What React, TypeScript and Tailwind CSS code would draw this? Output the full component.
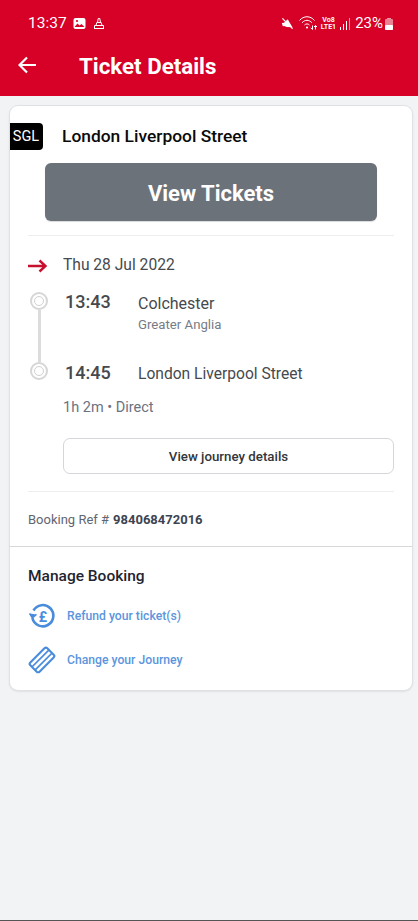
import React from 'react';

function StatusIcons() {
  return (
    <div className="flex items-center text-white">
      {/* muted speaker */}
      <svg width="13" height="13" viewBox="0 0 14 14" className="mr-[5px]">
        <path d="M1 5.5h2.5L8 2.5l3.5 9.5-6 -1.5L3 9H1.5z" fill="#fff" transform="rotate(-10 7 7)" />
        <path d="M1.5 1.5l11 11" stroke="#fff" strokeWidth="1.4" />
      </svg>
      {/* wifi */}
      <svg width="18" height="15" viewBox="0 0 18 15" fill="none" stroke="#fff" strokeWidth="1" className="mr-[4px] mt-[-2px]">
        <path d="M0.5 5.5C4.5 0.5 11.5 0.5 15.5 5.5" />
        <path d="M3 7.8C6 4.5 10 4.5 13 7.8" />
        <path d="M5.5 10c1.4-1.4 3.6-1.4 5 0" />
        <circle cx="8" cy="12.5" r="1.1" fill="#fff" stroke="none" />
        <path d="M13.5 10.5v4M11.8 12.8l1.7 1.7M16.5 14.5v-4M15 12l1.5-1.5 1.5 1.5" strokeWidth="1" />
      </svg>
      {/* volte */}
      <div className="mr-[4px] flex flex-col items-center text-[7px] font-bold leading-[7px]">
        <span>Vo8</span>
        <span>LTE1</span>
      </div>
      {/* signal */}
      <div className="mr-[5px] flex items-end gap-[2px]">
        <span className="h-[3px] w-[1px] bg-white" />
        <span className="h-[6px] w-[1px] bg-white" />
        <span className="h-[9px] w-[1px] bg-white" />
        <span className="h-[12px] w-[1px] bg-white/60" />
      </div>
      <span className="text-[15px] leading-none">23%</span>
      {/* battery */}
      <div className="ml-[2px] flex flex-col items-center">
        <span className="h-[1px] w-[4px] bg-white/60" />
        <div className="flex h-[11px] w-[8px] flex-col justify-end rounded-[1px] bg-white/50">
          <span className="h-[5px] w-full rounded-[1px] bg-white" />
        </div>
      </div>
    </div>
  );
}

function RefundIcon() {
  return (
    <svg width="28" height="28" viewBox="0 0 28 28" fill="none" stroke="#4a8cdc" strokeWidth="2.6">
      <path d="M5.5 8.5A10.6 10.6 0 1 1 4.4 16" />
      <path d="M1.5 11.5L4.4 16 8.5 12.5" fill="#4a8cdc" strokeWidth="1.4" />
      <text x="15" y="19.5" textAnchor="middle" fontSize="14" fontWeight="700" fill="#4a8cdc" stroke="none" fontFamily="Roboto, sans-serif">£</text>
    </svg>
  );
}

function TicketIcon() {
  return (
    <svg width="28" height="28" viewBox="0 0 28 28" fill="none" stroke="#4a8cdc" strokeWidth="2.1" strokeLinejoin="round">
      <rect x="2" y="7.5" width="24" height="13" rx="2" transform="rotate(-45 14 14)" />
      <path d="M3.9 21L21 3.9M7 24.1L24.1 7" strokeWidth="1.7" />
    </svg>
  );
}

function Stop() {
  return (
    <div className="flex h-[18px] w-[18px] shrink-0 items-center justify-center rounded-full border-[2px] border-[#d6d6d6] bg-white">
      <div className="h-[10px] w-[10px] rounded-full border border-[#d0d0d0]" />
    </div>
  );
}

export default function App() {
  return (
    <div className="flex h-[921px] flex-col overflow-hidden bg-[#f2f3f5] font-['Roboto',sans-serif]">
      {/* Header */}
      <header className="h-[96px] shrink-0 bg-[#d70026] text-white">
        <div className="flex h-[46px] items-center justify-between pl-[28px] pr-[25px] pt-[1px]">
          <div className="flex items-center">
            <span className="text-[15.5px] leading-none">13:37</span>
            <svg width="13" height="13" viewBox="0 0 13 13" className="ml-[6px]">
              <rect x="0.5" y="1" width="12" height="11" rx="2" fill="#fff" />
              <path d="M1.5 10l3-3.5 2 2 2-1.5 3 3z" fill="#d70026" />
              <circle cx="4" cy="4" r="1.1" fill="#d70026" />
            </svg>
            <svg width="12" height="13" viewBox="0 0 12 13" fill="none" stroke="#fff" strokeWidth="1" className="ml-[7px]">
              <path d="M4.5 5.5L5.2 1.5h1.6l.7 4M3 8.5l.8-3h4.4l.8 3M1 11.5h10M1.5 8.5h9v3h-9z" />
            </svg>
          </div>
          <StatusIcons />
        </div>
        <div className="flex h-[40px] items-center pl-[18px]">
          {/* back arrow, wider than the lucide one */}
          <svg width="18" height="18" viewBox="0 0 18 18" fill="none" stroke="#fff" strokeWidth="2.2" className="mt-[-3px]">
            <path d="M18 9H1.5M9 1.5L1.5 9 9 16.5" />
          </svg>
          <h1 className="ml-[43px] text-[22.3px] font-bold leading-none">Ticket Details</h1>
        </div>
      </header>

      {/* Card */}
      <main className="mx-[9px] mt-[9px] h-[586px] w-[404px] shrink-0 overflow-hidden rounded-[9px] border border-[#dfe1e5] bg-white shadow-[0_1px_2px_rgba(0,0,0,0.08)]">
        <div className="flex h-[57px] items-start pt-[17px]">
          <div className="ml-[-1px] flex h-[27px] w-[34px] items-center justify-center rounded-r-[4px] bg-black pt-[1px] text-[14.5px] leading-none text-white">
            SGL
          </div>
          <span className="ml-[19px] mt-[1px] text-[17.4px] font-medium leading-[24px] text-[#0a0a0a]">London Liverpool Street</span>
        </div>

        <div className="px-[35px]">
          <button className="flex h-[58px] w-[332px] items-center justify-center rounded-[6px] bg-[#6c727a] pt-[2px] text-[22px] font-bold text-white shadow-[0_1px_1px_rgba(0,0,0,0.15)]">
            View Tickets
          </button>
        </div>

        <div className="mx-[18px] mt-[14px] border-t border-[#eeeeee]" />

        {/* Journey */}
        <div className="px-[18px]">
          <div className="flex h-[56px] items-center pt-[3px]">
            <svg width="19" height="14" viewBox="0 0 19 14" fill="none" stroke="#c8102e" strokeWidth="2.4">
              <path d="M0 7h17M11.5 1.5L17.5 7l-6 5.5" />
            </svg>
            <span className="ml-[16px] text-[15.6px] text-[#46494d]">Thu 28 Jul 2022</span>
          </div>

          <div className="flex">
            <div className="w-[35px] shrink-0">
              <div className="ml-[2px] flex w-[18px] flex-col items-center">
                <Stop />
                <div className="h-[52px] w-[3px] bg-[#dcdcdc]" />
                <Stop />
              </div>
            </div>
            <div className="flex-1 pl-[2px]">
              <div className="flex items-start">
                <span className="w-[73px] text-[18px] font-medium leading-[20px] text-[#46494d]">13:43</span>
                <div className="pt-[2px]">
                  <div className="text-[16px] leading-[20px] text-[#46494d]">Colchester</div>
                  <div className="mt-[2px] text-[13.2px] leading-[18px] text-[#757c87]">Greater Anglia</div>
                </div>
              </div>
              <div className="mt-[29px] flex items-start">
                <span className="w-[73px] text-[18px] font-medium leading-[20px] text-[#46494d]">14:45</span>
                <span className="pt-[1px] text-[15.6px] leading-[20px] text-[#46494d]">London Liverpool Street</span>
              </div>
            </div>
          </div>

          <div className="mt-[14px] pl-[35px] text-[14.5px] leading-[20px] text-[#6b7280]">1h 2m • Direct</div>

          <div className="mt-[20px] pl-[35px]">
            <button className="flex h-[36px] w-full items-center justify-center rounded-[7px] border border-[#d4d6da] bg-white pt-[2px] text-[13.3px] font-medium text-[#33363a]">
              View journey details
            </button>
          </div>

          <div className="mt-[17px] border-t border-[#eeeeee]" />

          <div className="flex h-[54px] items-center pt-[1px] text-[13px] text-[#5f6670]">
            Booking Ref #<span className="ml-[4px] font-bold text-[#3d4452]">984068472016</span>
          </div>
        </div>

        <div className="border-t border-[#d8d8d8]" />

        {/* Manage */}
        <div className="px-[18px] pt-[19px]">
          <h2 className="text-[15.5px] font-medium leading-[20px] text-[#1f2430]">Manage Booking</h2>
          <div className="mt-[8px] flex h-[44px] items-center">
            <RefundIcon />
            <span className="ml-[11px] text-[12.2px] font-medium text-[#5b95dd]">Refund your ticket(s)</span>
          </div>
          <div className="flex h-[44px] items-center">
            <TicketIcon />
            <span className="ml-[11px] text-[12.2px] font-medium text-[#5b95dd]">Change your Journey</span>
          </div>
        </div>
      </main>

      <div className="flex-1" />
      <div className="h-[1px] shrink-0 bg-[#555555]" />
    </div>
  );
}
